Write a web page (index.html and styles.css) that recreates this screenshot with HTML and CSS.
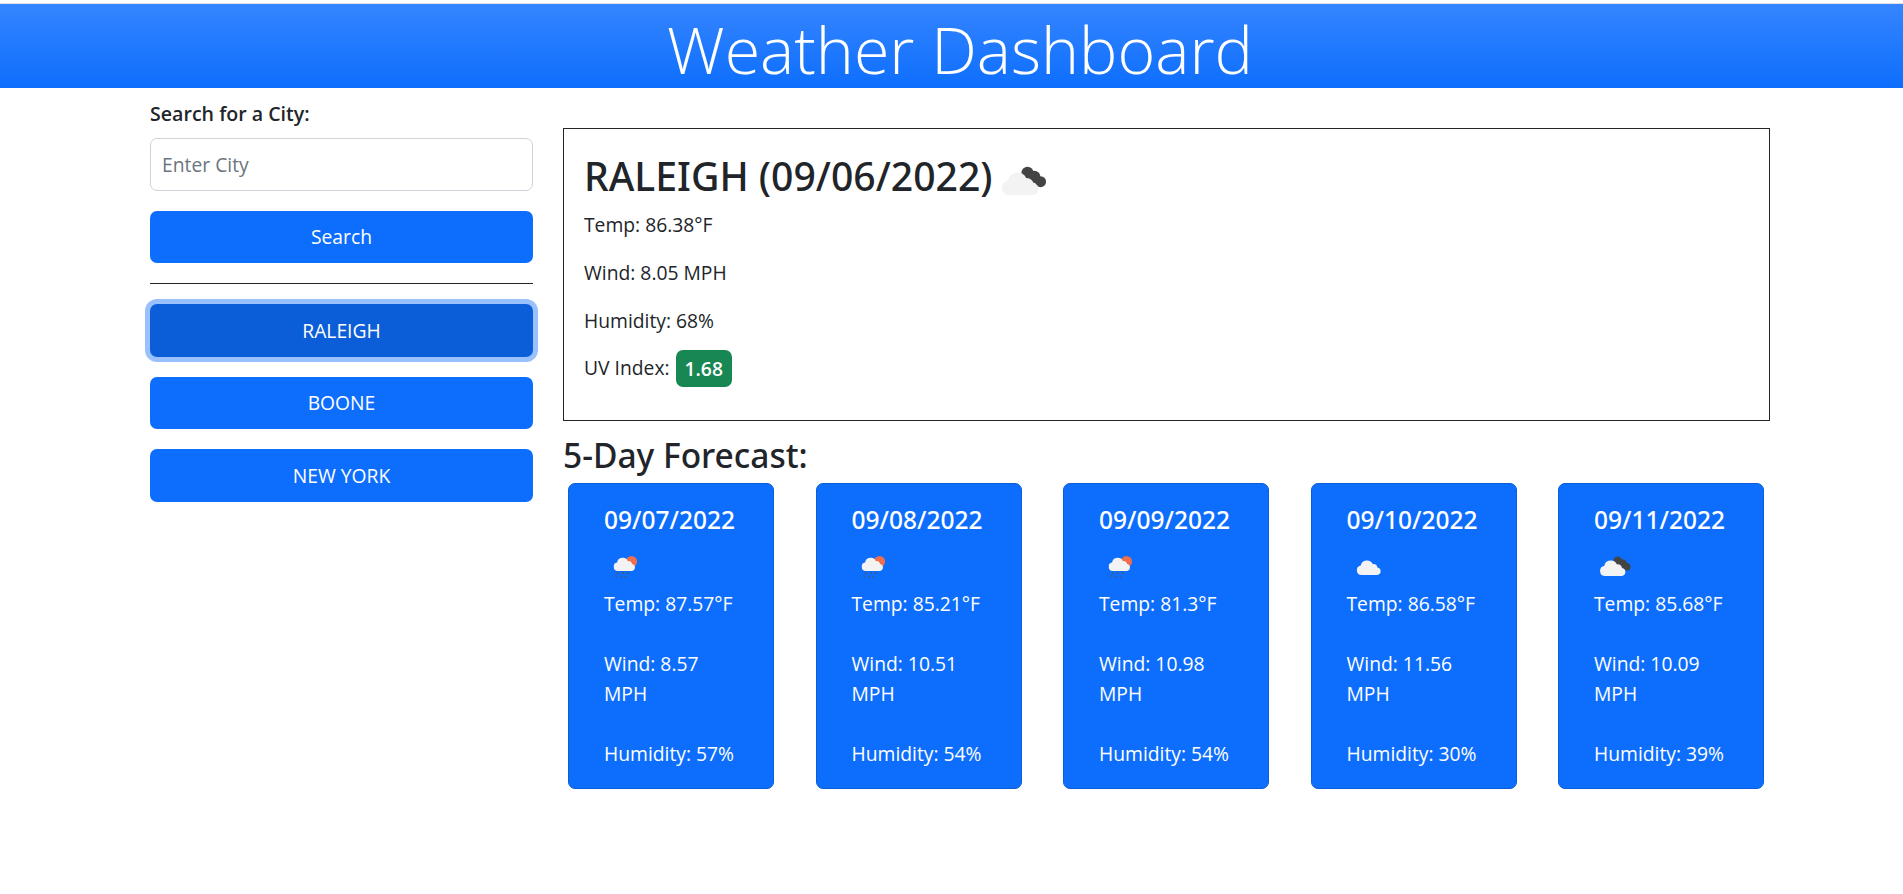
FILE: index.html
```html
<!DOCTYPE html>
<html lang="en">
<head>
    <meta charset="UTF-8">
    <title>Weather Dashboard</title>
    <link rel="stylesheet" href="styles.css">
</head>
<body>
<svg class="defs" width="0" height="0">
    <symbol id="cloud" viewBox="0 0 26 17">
        <path d="M5.2 17A5.1 5.1 0 0 1 4.2 6.900 6.800 6.800 0 0 1 17 5.400 4.600 4.600 0 0 1 22 8.900 4.100 4.100 0 0 1 21.800 17Z"/>
    </symbol>
    <symbol id="rain" viewBox="0 0 40 40">
        <circle cx="27.500" cy="14.500" r="5.600" fill="#ee6e4d"/>
        <use href="#cloud" x="9.500" y="9.500" width="22" height="14.500" fill="#f3f3f3"/>
        <path d="M14 25l-.7 2M19 25l-.7 2M24 25l-.7 2M12.300 28.500l-.5 1.500M17 29l-.5 1.500M21.500 29l-.5 1.500" stroke="#555" stroke-width="1.200" fill="none"/>
    </symbol>
    <symbol id="clouds" viewBox="0 0 40 40">
        <use href="#cloud" x="9" y="12" width="26" height="16" fill="#f3f3f3"/>
    </symbol>
    <symbol id="broken" viewBox="0 0 40 40">
        <g fill="#444">
            <circle cx="23.800" cy="13.600" r="4.200"/>
            <circle cx="28.500" cy="16.500" r="4.200"/>
            <circle cx="32.800" cy="19.800" r="3.800"/>
        </g>
        <use href="#cloud" x="6" y="12" width="26" height="17" fill="#f3f3f3"/>
    </symbol>
</svg>
<header class="top-bar">
    <h1>Weather Dashboard</h1>
</header>
<div class="page">
    <aside class="search-col">
        <label class="search-label" for="city">Search for a City:</label>
        <input class="search-input" type="text" id="city" placeholder="Enter City">
        <button class="btn">Search</button>
        <hr class="rule">
        <button class="btn btn-active">RALEIGH</button>
        <button class="btn">BOONE</button>
        <button class="btn">NEW YORK</button>
    </aside>
    <main class="main-col">
        <section class="today">
            <h2 class="today-title">RALEIGH (09/06/2022)<svg class="today-icon"><use href="#broken"/></svg></h2>
            <p>Temp: 86.38°F</p>
            <p>Wind: 8.05 MPH</p>
            <p>Humidity: 68%</p>
            <p class="uv-row">UV Index: <span class="uv-badge">1.68</span></p>
        </section>
        <h3 class="forecast-title">5-Day Forecast:</h3>
        <div class="cards">
            <article class="card">
                <h5>09/07/2022</h5>
                <svg class="card-icon"><use href="#rain"/></svg>
                <p>Temp: 87.57°F</p>
                <p>Wind: 8.57 MPH</p>
                <p>Humidity: 57%</p>
            </article>
            <article class="card">
                <h5>09/08/2022</h5>
                <svg class="card-icon"><use href="#rain"/></svg>
                <p>Temp: 85.21°F</p>
                <p>Wind: 10.51 MPH</p>
                <p>Humidity: 54%</p>
            </article>
            <article class="card">
                <h5>09/09/2022</h5>
                <svg class="card-icon"><use href="#rain"/></svg>
                <p>Temp: 81.3°F</p>
                <p>Wind: 10.98 MPH</p>
                <p>Humidity: 54%</p>
            </article>
            <article class="card">
                <h5>09/10/2022</h5>
                <svg class="card-icon"><use href="#clouds"/></svg>
                <p>Temp: 86.58°F</p>
                <p>Wind: 11.56 MPH</p>
                <p>Humidity: 30%</p>
            </article>
            <article class="card">
                <h5>09/11/2022</h5>
                <svg class="card-icon"><use href="#broken"/></svg>
                <p>Temp: 85.68°F</p>
                <p>Wind: 10.09 MPH</p>
                <p>Humidity: 39%</p>
            </article>
        </div>
    </main>
</div>
</body>
</html>
```

FILE: styles.css
```css
*{margin:0;padding:0;box-sizing:border-box;}
body{font-family:"Open Sans","Noto Sans",sans-serif;font-size:19.300px;line-height:30px;color:#212529;background:#fff;}
.defs{display:block;height:0;}
.top-bar{margin-top:3px;border-top:1px solid #dee2e6;height:85px;background:linear-gradient(#3585ff,#0d6efd);color:#fff;text-align:center;padding-left:17px;}
.top-bar h1{font-size:64.500px;font-weight:300;line-height:70px;padding-top:10px;}
.page{display:flex;gap:30px;padding-left:150px;}
.search-col{width:383px;padding-top:11px;display:flex;flex-direction:column;}
.search-label{font-weight:600;font-size:19.600px;margin-bottom:9px;}
.search-input{height:52.500px;border:1px solid #ced4da;border-radius:7px;padding:0 11px;font:inherit;color:#212529;margin-bottom:20px;}
.search-input::placeholder{color:#6c757d;}
.btn{height:52.500px;border:0;border-radius:7px;background:#0d6efd;color:#fff;font:inherit;margin-bottom:20px;padding-top:1px;}
.btn-active{background:#0b5ed7;box-shadow:0 0 0 5px #98c1fe;}
.rule{border:0;border-top:1px solid #212529;margin-bottom:20px;}
.main-col{width:1207px;padding-top:40px;}
.today{height:293px;border:1px solid #212529;padding:22.500px 20px;}
.today p{margin-bottom:18px;}
.today-title{display:flex;align-items:center;font-family:"Noto Sans",sans-serif;font-size:39.150px;font-weight:500;line-height:48px;margin-bottom:10.500px;}
.today-icon{width:58px;height:58px;margin:0 0 -12px;}
.uv-row{display:flex;align-items:center;gap:6px;margin-top:-4.500px;}
.uv-badge{background:#198754;color:#fff;font-weight:600;border-radius:7px;padding:0 9px;height:37px;line-height:37px;}
.forecast-title{font-family:"Noto Sans",sans-serif;font-size:33.500px;font-weight:500;line-height:42px;margin-top:13px;margin-bottom:7px;}
.cards{display:flex;gap:41.500px;padding:0 5px;}
.card{width:206px;height:306px;background:#0d6efd;border:1px solid #0b5ed7;border-radius:7px;color:#fff;padding:20px 30px 0 35px;}
.card h5{font-family:"Noto Sans",sans-serif;font-size:24.500px;font-weight:500;line-height:32px;}
.card-icon{display:block;width:40px;height:40px;margin:11px 0 2px;}
.card p{margin-bottom:30px;}
```
